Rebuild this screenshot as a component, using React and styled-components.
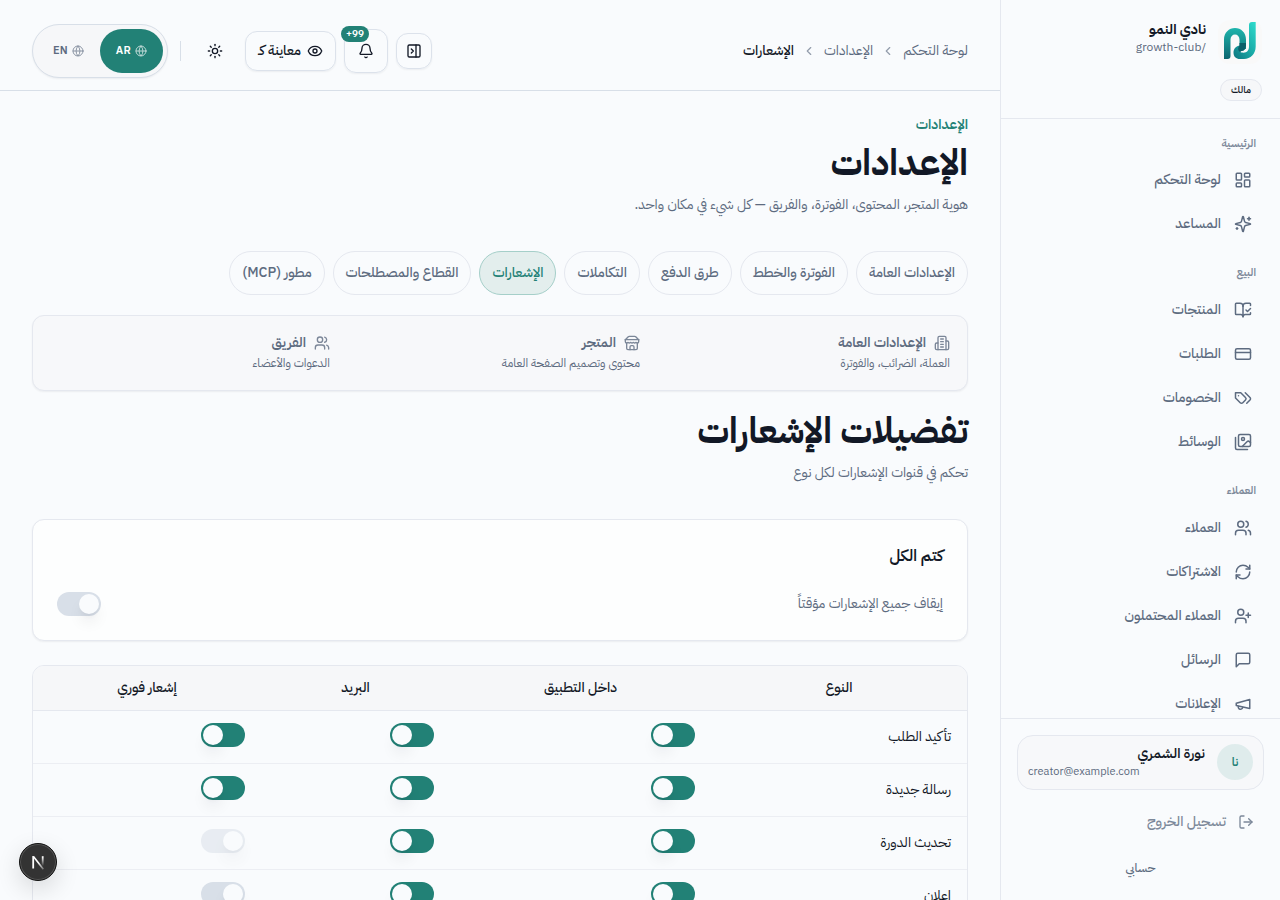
import React from 'react'
import styled, { createGlobalStyle, ThemeProvider, css } from 'styled-components'
import {
  Bell,
  BookOpenCheck,
  ChevronLeft,
  CreditCard,
  Eye,
  Globe,
  LayoutDashboard,
  LogOut,
  PanelRightClose,
  RefreshCw,
  Sun,
  UserPlus,
  Users
} from 'lucide-react'

const theme = {
  background: '#f9fbfd',
  ink: '#121826',
  muted: '#5d6b80',
  line: '#e5e8ef',
  lineSoft: '#eceef3',
  lineStrong: '#d8dfe8',
  soft: '#f6f7f9',
  primary: '#228176'
}

const Svg = ({ size = 18, children }) => (
  <svg
    width={size}
    height={size}
    viewBox="0 0 24 24"
    fill="none"
    stroke="currentColor"
    strokeWidth="2"
    strokeLinecap="round"
    strokeLinejoin="round"
  >
    {children}
  </svg>
)

const Sparkles = p => (
  <Svg {...p}>
    <path d="M9.937 15.5A2 2 0 0 0 8.5 14.063l-6.135-1.582a.5.5 0 0 1 0-.962L8.5 9.936A2 2 0 0 0 9.937 8.5l1.582-6.135a.5.5 0 0 1 .963 0L14.063 8.5A2 2 0 0 0 15.5 9.937l6.135 1.581a.5.5 0 0 1 0 .964L15.5 14.063a2 2 0 0 0-1.437 1.437l-1.582 6.135a.5.5 0 0 1-.963 0z" />
    <path d="M20 3v4" />
    <path d="M22 5h-4" />
    <path d="M4 17v2" />
    <path d="M5 18H3" />
  </Svg>
)

const Tags = p => (
  <Svg {...p}>
    <path d="M9 5H2v7l6.29 6.29c.94.94 2.48.94 3.42 0l3.58-3.58c.94-.94.94-2.48 0-3.42L9 5Z" />
    <path d="M6 9.01V9" />
    <path d="m15 5 6.3 6.3a2.4 2.4 0 0 1 0 3.4L17 19" />
  </Svg>
)

const Images = p => (
  <Svg {...p}>
    <path d="M18 22H4a2 2 0 0 1-2-2V6" />
    <path d="m22 13-1.296-1.296a2.41 2.41 0 0 0-3.408 0L11 18" />
    <circle cx="12" cy="8" r="2" />
    <rect width="16" height="16" x="6" y="2" rx="2" />
  </Svg>
)

const Message = p => (
  <Svg {...p}>
    <path d="M21 15a2 2 0 0 1-2 2H7l-4 4V5a2 2 0 0 1 2-2h14a2 2 0 0 1 2 2z" />
  </Svg>
)

const Megaphone = p => (
  <Svg {...p}>
    <path d="m3 11 18-5v12L3 14v-3z" />
    <path d="M11.6 16.8a3 3 0 1 1-5.8-1.6" />
  </Svg>
)

const Building = p => (
  <Svg {...p}>
    <path d="M6 22V4a2 2 0 0 1 2-2h8a2 2 0 0 1 2 2v18Z" />
    <path d="M6 12H4a2 2 0 0 0-2 2v6a2 2 0 0 0 2 2h2" />
    <path d="M18 9h2a2 2 0 0 1 2 2v9a2 2 0 0 1-2 2h-2" />
    <path d="M10 6h4" />
    <path d="M10 10h4" />
    <path d="M10 14h4" />
    <path d="M10 18h4" />
  </Svg>
)

const Store = p => (
  <Svg {...p}>
    <path d="m2 7 4.41-4.41A2 2 0 0 1 7.83 2h8.34a2 2 0 0 1 1.42.59L22 7" />
    <path d="M4 12v8a2 2 0 0 0 2 2h12a2 2 0 0 0 2-2v-8" />
    <path d="M15 22v-4a2 2 0 0 0-2-2h-2a2 2 0 0 0-2 2v4" />
    <path d="M2 7h20" />
    <path d="M22 7v3a2 2 0 0 1-2 2a2.7 2.7 0 0 1-1.59-.63.7.7 0 0 0-.82 0A2.7 2.7 0 0 1 16 12a2.7 2.7 0 0 1-1.59-.63.7.7 0 0 0-.82 0A2.7 2.7 0 0 1 12 12a2.7 2.7 0 0 1-1.59-.63.7.7 0 0 0-.82 0A2.7 2.7 0 0 1 8 12a2.7 2.7 0 0 1-1.59-.63.7.7 0 0 0-.82 0A2.7 2.7 0 0 1 4 12a2 2 0 0 1-2-2V7" />
  </Svg>
)

const Logo = () => (
  <svg width="44" height="44" viewBox="0 0 44 44" fill="none">
    <defs>
      <linearGradient id="leg" x1="0" y1="0" x2="0" y2="1">
        <stop offset="0" stopColor="#1fb5ac" />
        <stop offset="1" stopColor="#0d6670" />
      </linearGradient>
      <linearGradient id="stem" x1="1" y1="0" x2="0.2" y2="1">
        <stop offset="0" stopColor="#2fdccd" />
        <stop offset="0.6" stopColor="#1aa9a6" />
        <stop offset="1" stopColor="#0f7f86" />
      </linearGradient>
    </defs>
    <path
      d="M6 39V19.5C6 12.5 11 8 17 8s11 4.5 11 11.5V29h-6.500V19.500c0-3-2-5-4.500-5s-4.500 2-4.500 5V36c0 2-1 3-3 3z"
      fill="url(#leg)"
    />
    <path
      d="M31 5c0-2 1-3 3-3h3.700v24.500C37.700 34 32.500 39 26 39h-4c-4 0-6.500-2.500-6.500-6.300 0-4 2.500-6.700 6.500-7.200H28c0 3-1.500 5-4.500 5.600-2 .4-1.500 1.600 2 1.600 3.500 0 5.500-2.500 5.500-6.200z"
      fill="url(#stem)"
    />
    <path d="M21.500 23H28v2.500c0 3-1.500 5-4.500 5.600-1.200.3-1.500.9-.5 1.300-3-1.400-3.800-3.900-1.500-6.900z" fill="#0c5f69" />
  </svg>
)

const groups = [
  {
    name: 'الرئيسية',
    items: [
      { name: 'لوحة التحكم', icon: LayoutDashboard },
      { name: 'المساعد', icon: Sparkles }
    ]
  },
  {
    name: 'البيع',
    items: [
      { name: 'المنتجات', icon: BookOpenCheck },
      { name: 'الطلبات', icon: CreditCard },
      { name: 'الخصومات', icon: Tags },
      { name: 'الوسائط', icon: Images }
    ]
  },
  {
    name: 'العملاء',
    items: [
      { name: 'العملاء', icon: Users },
      { name: 'الاشتراكات', icon: RefreshCw },
      { name: 'العملاء المحتملون', icon: UserPlus },
      { name: 'الرسائل', icon: Message },
      { name: 'الإعلانات', icon: Megaphone }
    ]
  }
]

const tabs = [
  'الإعدادات العامة',
  'الفوترة والخطط',
  'طرق الدفع',
  'التكاملات',
  'الإشعارات',
  'القطاع والمصطلحات',
  'مطور (MCP)'
]

const links = [
  { name: 'الإعدادات العامة', text: 'العملة، الضرائب، والفوترة', icon: Building },
  { name: 'المتجر', text: 'محتوى وتصميم الصفحة العامة', icon: Store },
  { name: 'الفريق', text: 'الدعوات والأعضاء', icon: Users }
]

const rows = [
  { name: 'تأكيد الطلب', values: [{ on: true }, { on: true }, { on: true }] },
  { name: 'رسالة جديدة', values: [{ on: true }, { on: true }, { on: true }] },
  { name: 'تحديث الدورة', values: [{ on: true }, { on: true }, { disabled: true }] },
  { name: 'إعلان', values: [{ on: true }, { on: true }, {}] }
]

const Toggle = ({ on, disabled }) => (
  <Switch role="switch" aria-checked={!!on} $on={on} $disabled={disabled}>
    <Knob />
  </Switch>
)

const Side = () => (
  <Sidebar>
    <Brand>
      <BrandRow>
        <LogoBox>
          <Logo />
        </LogoBox>
        <BrandText>
          <BrandName>نادي النمو</BrandName>
          <BrandSlug>/growth-club</BrandSlug>
        </BrandText>
      </BrandRow>
      <Role>مالك</Role>
    </Brand>
    <Nav>
      {groups.map(({ name, items }) => (
        <Group key={name}>
          <GroupName>{name}</GroupName>
          {items.map(({ name, icon: Icon }) => (
            <NavItem key={name}>
              <Icon size={18} />
              {name}
            </NavItem>
          ))}
        </Group>
      ))}
    </Nav>
    <SideFooter>
      <UserCard>
        <Avatar>نا</Avatar>
        <UserText>
          <UserName>نورة الشمري</UserName>
          <UserMail>creator@example.com</UserMail>
        </UserText>
      </UserCard>
      <SignOut>
        <LogOut size={16} />
        تسجيل الخروج
      </SignOut>
      <Account>حسابي</Account>
    </SideFooter>
  </Sidebar>
)

const Top = () => (
  <TopBar>
    <Crumbs>
      <span>لوحة التحكم</span>
      <ChevronLeft size={14} />
      <span>الإعدادات</span>
      <ChevronLeft size={14} />
      <Current>الإشعارات</Current>
    </Crumbs>
    <Actions>
      <IconButton $size={36}>
        <PanelRightClose size={16} />
      </IconButton>
      <IconButton $size={44}>
        <Bell size={16} />
        <Count>99+</Count>
      </IconButton>
      <Preview>
        <Eye size={16} />
        <span>معاينة كـ</span>
      </Preview>
      <IconButton $size={44} $plain>
        <Sun size={16} />
      </IconButton>
      <Divider />
      <Langs>
        <Lang $active>
          <Globe size={12} />
          AR
        </Lang>
        <Lang>
          <Globe size={12} />
          EN
        </Lang>
      </Langs>
    </Actions>
  </TopBar>
)

const App = () => (
  <ThemeProvider theme={theme}>
    <Global />
    <Shell dir="rtl">
      <Side />
      <Main>
        <Top />
        <Content>
          <Eyebrow>الإعدادات</Eyebrow>
          <Title>الإعدادات</Title>
          <Lead>هوية المتجر، المحتوى، الفوترة، والفريق — كل شيء في مكان واحد.</Lead>
          <Tabs>
            {tabs.map(tab => (
              <Tab key={tab} $active={tab === 'الإشعارات'}>
                {tab}
              </Tab>
            ))}
          </Tabs>
          <Links>
            {links.map(({ name, text, icon: Icon }) => (
              <div key={name}>
                <LinkName>
                  <Icon size={16} />
                  {name}
                </LinkName>
                <LinkText>{text}</LinkText>
              </div>
            ))}
          </Links>
          <Title $second>تفضيلات الإشعارات</Title>
          <Lead>تحكم في قنوات الإشعارات لكل نوع</Lead>
          <MuteCard>
            <MuteTitle>كتم الكل</MuteTitle>
            <MuteRow>
              إيقاف جميع الإشعارات مؤقتاً
              <Toggle />
            </MuteRow>
          </MuteCard>
          <Table>
            <HeadRow>
              <span>النوع</span>
              <span>داخل التطبيق</span>
              <span>البريد</span>
              <span>إشعار فوري</span>
            </HeadRow>
            {rows.map(({ name, values }) => (
              <Row key={name}>
                <span>{name}</span>
                {values.map((value, i) => (
                  <Toggle key={i} {...value} />
                ))}
              </Row>
            ))}
          </Table>
        </Content>
      </Main>
      <DevBadge>
        <svg width="38" height="38" viewBox="0 0 38 38" fill="none">
          <defs>
            <linearGradient id="diag" x1="19" y1="20" x2="25" y2="27" gradientUnits="userSpaceOnUse">
              <stop stopColor="#fff" />
              <stop offset="1" stopColor="#fff" stopOpacity="0.2" />
            </linearGradient>
            <linearGradient id="bar" x1="0" y1="14" x2="0" y2="23" gradientUnits="userSpaceOnUse">
              <stop stopColor="#fff" />
              <stop offset="1" stopColor="#fff" stopOpacity="0" />
            </linearGradient>
          </defs>
          <path d="M13.3 13.2h2l9.7 12.6-1.3 1L15 15.6z" fill="url(#diag)" />
          <path d="M14.2 13.2v12.3" stroke="#fff" strokeWidth="1.8" />
          <path d="M23.7 13.2v10" stroke="url(#bar)" strokeWidth="1.8" />
        </svg>
      </DevBadge>
    </Shell>
  </ThemeProvider>
)

const Global = createGlobalStyle`
  * {
    box-sizing: border-box;
  }
  body {
    margin: 0;
    overflow: hidden;
    background: #f9fbfd;
    font-family: 'IBM Plex Sans Arabic', 'Noto Sans Arabic', 'Noto Sans', sans-serif;
  }
`
const Shell = styled.div`
  display: flex;
  height: 900px;
  overflow: hidden;
  background: ${({ theme: { background } }) => background};
  color: ${({ theme: { ink } }) => ink};
  font-size: 14px;
  line-height: 20px;
  svg {
    flex-shrink: 0;
  }
`

const Sidebar = styled.aside`
  width: 280px;
  flex-shrink: 0;
  display: flex;
  flex-direction: column;
  border-left: 1px solid ${({ theme: { line } }) => line};
`
const Brand = styled.div`
  height: 119px;
  flex-shrink: 0;
  padding: 20px 18px 0;
  border-bottom: 1px solid ${({ theme: { line } }) => line};
`
const BrandRow = styled.div`
  display: flex;
  gap: 12px;
  height: 59px;
`
const LogoBox = styled.div`
  width: 44px;
  height: 44px;
  border-radius: 12px;
  background: #f9f9f9;
`
const BrandText = styled.div`
  padding-top: 1px;
`
const BrandName = styled.div`
  font-weight: 700;
  line-height: 18px;
`
const BrandSlug = styled.div`
  font-size: 12px;
  line-height: 16px;
  color: ${({ theme: { muted } }) => muted};
`
const Role = styled.span`
  display: flex;
  align-items: center;
  justify-content: center;
  width: 42px;
  height: 22px;
  border: 1px solid ${({ theme: { line } }) => line};
  border-radius: 11px;
  background: ${({ theme: { soft } }) => soft};
  font-size: 10px;
  font-weight: 500;
`
const Nav = styled.nav`
  flex: 1;
  min-height: 0;
  overflow: hidden;
  padding: 8px 24px 0;
`
const GroupName = styled.div`
  height: 31px;
  font-size: 11px;
  font-weight: 600;
  line-height: 31px;
  color: #7c8899;
`
const Group = styled.div`
  & + & {
    margin-top: 11px;
  }
  &:first-child ${GroupName} {
    line-height: 33px;
  }
`
const NavItem = styled.div`
  display: flex;
  align-items: center;
  gap: 13px;
  height: 44px;
  padding: 0 4px;
  font-weight: 500;
  color: ${({ theme: { muted } }) => muted};
`
const SideFooter = styled.div`
  height: 182px;
  flex-shrink: 0;
  padding: 16px;
  border-top: 1px solid ${({ theme: { line } }) => line};
`
const UserCard = styled.div`
  display: flex;
  align-items: center;
  gap: 12px;
  height: 55px;
  padding: 0 10px 1px;
  border: 1px solid ${({ theme: { line } }) => line};
  border-radius: 16px;
  background: #f7f8fa;
`
const Avatar = styled.div`
  width: 36px;
  height: 36px;
  flex-shrink: 0;
  border-radius: 50%;
  background: #dfecec;
  color: ${({ theme: { primary } }) => primary};
  font-size: 12px;
  font-weight: 600;
  line-height: 36px;
  text-align: center;
`
const UserText = styled.div`
  flex: 1;
`
const UserName = styled.div`
  font-weight: 600;
  line-height: 18px;
`
const UserMail = styled.div`
  direction: ltr;
  font-size: 11px;
  line-height: 17px;
  color: ${({ theme: { muted } }) => muted};
`
const SignOut = styled.div`
  display: flex;
  align-items: center;
  gap: 12px;
  height: 44px;
  margin-top: 10px;
  padding: 0 10px;
  font-weight: 500;
  color: #7c8899;
`
const Account = styled.div`
  margin-top: 14px;
  text-align: center;
  font-size: 12px;
  font-weight: 500;
  color: ${({ theme: { muted } }) => muted};
`

const Main = styled.main`
  flex: 1;
  min-width: 0;
`
const TopBar = styled.header`
  display: flex;
  align-items: center;
  justify-content: space-between;
  height: 91px;
  padding: 11px 32px 0;
  border-bottom: 1px solid ${({ theme: { lineStrong } }) => lineStrong};
`
const Crumbs = styled.div`
  display: flex;
  align-items: center;
  gap: 8px;
  color: ${({ theme: { muted } }) => muted};
  svg {
    opacity: 0.65;
  }
`
const Current = styled.span`
  font-weight: 500;
  color: ${({ theme: { ink } }) => ink};
`
const Actions = styled.div`
  display: flex;
  align-items: center;
  gap: 8px;
`
const outlined = css`
  border: 1px solid #dce2eb;
  border-radius: 12px;
  box-shadow: 0 1px 2px rgba(18, 24, 38, 0.06);
`
const IconButton = styled.div`
  position: relative;
  display: flex;
  align-items: center;
  justify-content: center;
  width: ${({ $size }) => $size}px;
  height: ${({ $size }) => $size}px;
  ${({ $plain }) => !$plain && outlined};
`
const Count = styled.span`
  position: absolute;
  top: -4px;
  left: -4px;
  height: 16px;
  padding: 0 5px;
  border-radius: 8px;
  background: ${({ theme: { primary } }) => primary};
  color: #fff;
  font-size: 10px;
  font-weight: 600;
  line-height: 16px;
`
const Preview = styled.div`
  display: flex;
  align-items: center;
  justify-content: center;
  gap: 6px;
  width: 91px;
  height: 40px;
  font-weight: 500;
  ${outlined};
`
const Divider = styled.div`
  width: 1px;
  height: 20px;
  margin: 0 4px;
  background: ${({ theme: { lineStrong } }) => lineStrong};
`
const Langs = styled.div`
  display: flex;
  height: 54px;
  padding: 4px;
  border: 1px solid ${({ theme: { lineStrong } }) => lineStrong};
  border-radius: 27px;
  background: ${({ theme: { soft } }) => soft};
  box-shadow: 0 1px 2px rgba(18, 24, 38, 0.06);
`
const Lang = styled.div`
  display: flex;
  align-items: center;
  justify-content: center;
  gap: 4px;
  width: 63px;
  height: 44px;
  border-radius: 22px;
  font-size: 11px;
  font-weight: 600;
  letter-spacing: 0.3px;
  color: ${({ $active, theme: { muted } }) => ($active ? '#fff' : muted)};
  ${({ $active, theme: { primary } }) => $active && `background: ${primary};`}
  svg {
    opacity: 0.7;
  }
`

const Content = styled.div`
  padding: 24px 32px 0;
`
const Eyebrow = styled.div`
  font-weight: 600;
  color: ${({ theme: { primary } }) => primary};
`
const Title = styled.h1`
  margin: ${({ $second }) => ($second ? '16px 0 0' : '4px 0 0')};
  font-size: 36px;
  font-weight: 700;
  line-height: 48px;
`
const Lead = styled.p`
  margin: 6px 0 0;
  line-height: 24px;
  color: ${({ theme: { muted } }) => muted};
`
const Tabs = styled.div`
  display: flex;
  gap: 8px;
  margin-top: 34px;
`
const Tab = styled.div`
  height: 44px;
  padding: 0 12px;
  border: 1px solid ${({ $active, theme: { line } }) => ($active ? '#a5cfc9' : line)};
  border-radius: 22px;
  background: ${({ $active }) => ($active ? '#e3eeed' : 'transparent')};
  color: ${({ $active, theme: { primary, muted } }) => ($active ? primary : muted)};
  font-weight: 500;
  line-height: 42px;
`
const Links = styled.div`
  display: grid;
  grid-template-columns: repeat(3, 1fr);
  gap: 30px;
  height: 76px;
  margin-top: 20px;
  padding: 16px 17px;
  border: 1px solid ${({ theme: { line } }) => line};
  border-radius: 12px;
  background: #f7f8fa;
  box-shadow: 0 1px 2px rgba(18, 24, 38, 0.06);
  color: ${({ theme: { muted } }) => muted};
`
const LinkName = styled.div`
  display: flex;
  align-items: center;
  gap: 8px;
  font-weight: 600;
  line-height: 21px;
  svg {
    opacity: 0.8;
  }
`
const LinkText = styled.div`
  font-size: 12px;
`
const MuteCard = styled.div`
  height: 122px;
  margin-top: 34px;
  padding: 24px;
  border: 1px solid ${({ theme: { line } }) => line};
  border-radius: 12px;
  background: #fdfefe;
  box-shadow: 0 1px 2px rgba(18, 24, 38, 0.06);
`
const MuteTitle = styled.div`
  font-size: 16px;
  font-weight: 600;
  line-height: 24px;
`
const MuteRow = styled.div`
  display: flex;
  align-items: center;
  justify-content: space-between;
  margin-top: 24px;
  color: ${({ theme: { muted } }) => muted};
`
const Switch = styled.div`
  display: flex;
  justify-content: ${({ $on }) => ($on ? 'flex-end' : 'flex-start')};
  width: 44px;
  height: 24px;
  padding: 2px;
  border-radius: 12px;
  background: ${({ $on, theme: { primary, lineStrong } }) => ($on ? primary : lineStrong)};
  opacity: ${({ $disabled }) => ($disabled ? 0.5 : 1)};
`
const Knob = styled.div`
  width: 20px;
  height: 20px;
  border-radius: 50%;
  background: ${({ theme: { background } }) => background};
  box-shadow: 0 10px 15px -3px rgba(18, 24, 38, 0.1), 0 4px 6px -4px rgba(18, 24, 38, 0.1);
`
const Table = styled.div`
  margin-top: 24px;
  border: 1px solid ${({ theme: { line } }) => line};
  border-radius: 12px;
  overflow: hidden;
`
const HeadRow = styled.div`
  display: grid;
  grid-template-columns: 256px 261px 189px 228px;
  height: 45px;
  border-bottom: 1px solid ${({ theme: { line } }) => line};
  background: #f6f7f9;
  font-weight: 500;
  line-height: 44px;
  text-align: center;
`
const Row = styled.div`
  display: grid;
  grid-template-columns: 256px 261px 189px 228px;
  height: 53px;
  padding-top: 12px;
  border-bottom: 1px solid ${({ theme: { lineSoft } }) => lineSoft};
  line-height: 28px;
  & > * {
    margin-right: 16px;
  }
`
const DevBadge = styled.div`
  position: fixed;
  left: 19px;
  bottom: 19px;
  width: 38px;
  height: 38px;
  border: 1px solid #111;
  border-radius: 50%;
  background: #333;
  box-shadow: inset 0 0 0 1px #555, 0 8px 24px rgba(0, 0, 0, 0.14);
  svg {
    display: block;
    margin: -1px;
  }
`
export default App
